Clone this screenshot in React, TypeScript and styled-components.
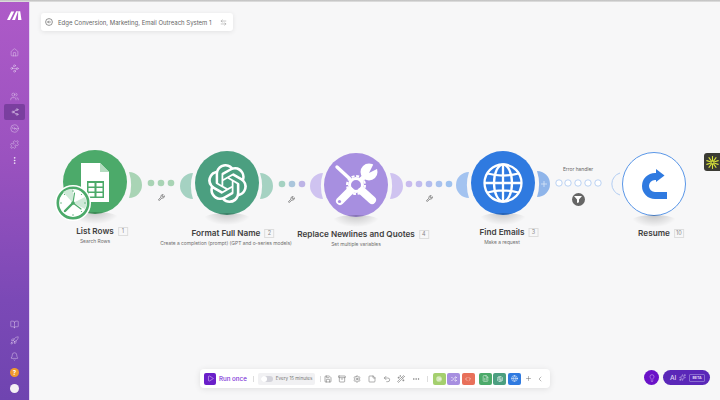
import React from "react";
import styled, { createGlobalStyle } from "styled-components";
import {
  House, Waypoints, Users, Share2, Disc3, Puzzle, EllipsisVertical, BookOpen, Rocket, Bell,
  ArrowLeftRight, Wrench, Play, Save, Archive, Settings, StickyNote, Undo2, Wand2,
  Ellipsis, Plus, ChevronLeft, Lightbulb, Sparkles, Shuffle, Globe, FileSpreadsheet, Cog, Code,
} from "lucide-react";
import { SiOpenai } from "react-icons/si";

const Global = createGlobalStyle`
  html, body { margin: 0; padding: 0; width: 720px; height: 400px; overflow: hidden; }
  body { font-family: Inter, "Noto Sans", sans-serif; background: #f7f7f8; }
  #root { width: 720px; height: 400px; }
  svg { flex: none; }
`;

const Page = styled.div`
  width: 720px; height: 400px; display: flex; position: relative; overflow: hidden;
  background: #f7f7f8;
  &::before {
    content: ""; position: absolute; left: 0; right: 0; top: 0; height: 2px; z-index: 5;
    background: linear-gradient(#bdbdbd, #e4e4e4);
  }
`;

const Sidebar = styled.nav`
  width: 29px; flex: none; box-sizing: border-box; display: flex; flex-direction: column;
  align-items: center; padding: 11px 0 4px;
  background: linear-gradient(180deg, #ae5ac8 0%, #9a52bf 40%, #7b49b6 75%, #6f44b0 100%);
  box-shadow: 1px 0 0 #e6d8f3;
`;
const Logo = styled.svg`width: 14.5px; height: 9px; margin-bottom: 24px; display: block;`;
const NavGroup = styled.div<{ $gap?: number }>`display: flex; flex-direction: column; align-items: center; margin-bottom: ${p => p.$gap || 0}px;`;
const NavItem = styled.div<{ $active?: boolean }>`
  width: 21px; height: 16px; display: flex; align-items: center; justify-content: center;
  border-radius: 2px; color: #e6d4f2;
  background: ${p => (p.$active ? "#7a3f9f" : "transparent")};
`;
const Bottom = styled.div`margin-top: auto; display: flex; flex-direction: column; align-items: center;`;
const HelpDot = styled.div`
  width: 9px; height: 9px; flex: none; border-radius: 50%; background: #f09a2e; color: #fff; font-size: 6px;
  font-weight: 700; display: flex; align-items: center; justify-content: center;
`;
const Avatar = styled.div`width: 9px; height: 9px; flex: none; border-radius: 50%; background: #f4f0f4;`;

const Canvas = styled.main`flex: 1; position: relative;`;

const TitleCard = styled.div`
  position: absolute; left: 12px; top: 13px; width: 192px; height: 18px; box-sizing: border-box;
  background: #fff; border-radius: 3px; box-shadow: 0 1px 5px rgba(0,0,0,.09);
  display: flex; align-items: center; padding: 0 6px 0 4px; gap: 5px; color: #666;
`;
const TitleText = styled.span`font-size: 6px; color: #666; white-space: nowrap; flex: 1;`;

const Wires = styled.svg`position: absolute; left: -29px; top: 0; width: 720px; height: 400px; pointer-events: none;`;

const Disc = styled.div<{ $x: number; $y: number; $bg: string; $ring?: string }>`
  position: absolute; left: ${p => p.$x - 29 - 32}px; top: ${p => p.$y - 32}px; width: 64px; height: 64px;
  box-sizing: border-box; border-radius: 50%; background: ${p => p.$bg};
  border: ${p => (p.$ring ? `1px solid ${p.$ring}` : "none")};
  display: flex; align-items: center; justify-content: center; color: #fff;
  &::after {
    content: ""; position: absolute; left: 8px; right: 8px; top: 62px; height: 12px; border-radius: 50%;
    background: radial-gradient(ellipse at center top, rgba(0,0,0,.2), rgba(0,0,0,0) 72%);
  }
`;
const Label = styled.div<{ $x: number; $y: number }>`
  position: absolute; left: ${p => p.$x - 29}px; top: ${p => p.$y}px; transform: translateX(-50%);
  display: flex; flex-direction: column; align-items: center; white-space: nowrap;
`;
const Name = styled.div`font-size: 8.2px; font-weight: 600; color: #404040; line-height: 11px; position: relative;`;
const Badge = styled.span`
  position: absolute; left: 100%; top: 1px; margin-left: 4px; min-width: 7px; height: 7px; padding: 0 0.5px;
  border: 1px solid #ddd; font-size: 5.5px; font-weight: 400; color: #888; line-height: 7px; text-align: center;
`;
const Sub = styled.div`font-size: 4.9px; color: #6e6e6e; line-height: 7px; margin-top: 0.5px;`;
const ErrorLabel = styled.div`
  position: absolute; left: ${578 - 29}px; top: 166px; transform: translateX(-50%);
  font-size: 4.9px; color: #666; white-space: nowrap;
`;
const Tool = styled.div<{ $x: number; $y: number }>`
  position: absolute; left: ${p => p.$x - 29 - 3.5}px; top: ${p => p.$y - 3.5}px; width: 7px; height: 7px;
  color: #555; display: flex;
`;
const Filter = styled.div`
  position: absolute; left: ${578 - 29 - 6.5}px; top: ${199 - 6.5}px; width: 13px; height: 13px; border-radius: 50%;
  background: #666; display: flex; align-items: center; justify-content: center;
`;
const Side = styled.div`
  position: absolute; right: 0; top: 153px; width: 16px; height: 18px; background: #3b3b34;
  border-radius: 3px 0 0 3px; display: flex; align-items: center; justify-content: center;
`;

const Toolbar = styled.div`
  position: absolute; left: 171px; top: 369px; width: 350px; height: 19px; box-sizing: border-box;
  background: #fff; border-radius: 4px; box-shadow: 0 1px 6px rgba(0,0,0,.1);
  display: flex; align-items: center; padding: 0 0 0 4px;
`;
const RunButton = styled.div`
  width: 12px; height: 12px; flex: none; border-radius: 2px; background: #6a1fc9; color: #fff;
  display: flex; align-items: center; justify-content: center;
`;
const RunText = styled.span`font-size: 6.2px; font-weight: 500; color: #7b2fd6; margin-left: 3px; white-space: nowrap;`;
const Divider = styled.span<{ $m: string }>`width: 1px; height: 6px; flex: none; background: #ddd; margin: ${p => p.$m};`;
const Schedule = styled.div`
  width: 57px; height: 12px; flex: none; box-sizing: border-box; background: #f1f1f3; border-radius: 2px;
  display: flex; align-items: center; padding: 0 3px; gap: 3px;
`;
const Toggle = styled.span`width: 12px; height: 6px; flex: none; border-radius: 3px; background: #d3d3da; display: flex; align-items: center;
  &::before { content: ""; width: 6px; height: 6px; border-radius: 50%; background: #fff; }`;
const ScheduleText = styled.span`font-size: 4.6px; color: #777; white-space: nowrap;`;
const Icons = styled.div`display: flex; align-items: center; gap: 6.7px; margin-left: 3px; color: #555; flex: none;`;
const Chips = styled.div<{ $ml?: number }>`display: flex; gap: 1.5px; flex: none; margin-left: ${p => p.$ml || 0}px;`;
const Chip = styled.div<{ $bg: string }>`
  width: 13px; height: 12px; border-radius: 2px; background: ${p => p.$bg}; color: #fff;
  display: flex; align-items: center; justify-content: center;
`;
const EndIcons = styled.div`display: flex; align-items: center; gap: 4px; margin-left: 4px; color: #666; flex: none;`;

const AiRow = styled.div`
  position: absolute; left: 615px; top: 370px; display: flex; align-items: center; gap: 4px;
`;
const Bulb = styled.div`
  width: 15px; height: 15px; border-radius: 50%; background: #6a12c8; color: #e4d4f6;
  display: flex; align-items: center; justify-content: center;
`;
const AiPill = styled.div`
  width: 47px; height: 15px; border-radius: 8px; background: #5a27b8; color: #e0d8f6;
  display: flex; align-items: center; padding-left: 7px; box-sizing: border-box; gap: 3px;
`;
const AiText = styled.span`font-size: 6.5px; font-weight: 500;`;
const Beta = styled.span`font-size: 3.6px; border: 1px solid #8a6bd0; border-radius: 1px; padding: 1px 2px; line-height: 4px; font-weight: 700;`;

const Moon = ({ x, y, dir, fill, h = 13 }: { x: number; y: number; dir: 1 | -1; fill: string; h?: number }) => (
  <path
    d={`M${x} ${y - h} A${h} ${h} 0 0 ${dir > 0 ? 1 : 0} ${x} ${y + h} A42 42 0 0 ${dir > 0 ? 0 : 1} ${x} ${y - h}Z`}
    fill={fill}
  />
);

const dots: [number, number, string][] = [
  [151, 183, "#a9d4b5"], [161, 183, "#a9d4b5"], [171, 183, "#a9d4b5"],
  [282, 184, "#a5d2c2"], [292, 184, "#abc6dc"], [302, 184, "#bdb4e6"],
  [409, 184, "#c9bbee"], [419, 184, "#c2bcee"], [429, 184, "#b4bdee"], [439, 184, "#a9c2ee"], [449, 184, "#9fc2ef"],
];

const navTop = [House, Waypoints];

const ClockWrap = styled.div`
  position: absolute; left: ${55 - 29}px; top: 185px; width: 36px; height: 36px; display: flex;
`;

function ClockBadge() {
  return (
    <ClockWrap>
      <svg width="36" height="36" viewBox="0 0 36 36">
        <circle cx="18" cy="18" r="18" fill="#fff" />
        <circle cx="18" cy="18" r="15.2" fill="#fff" stroke="#4caa6a" strokeWidth="2.6" />
        <path d="M18 18 L8 7 A15 15 0 0 1 18 4Z" fill="#cfe9d8" />
        <path d="M18 18 L30 12 A14 14 0 0 1 30 24Z" fill="#cfe9d8" />
        <path d="M18 18 L19.5 8 M18 18 L26 24" stroke="#4caa6a" strokeWidth="1.2" strokeLinecap="round" />
        <path d="M18 18 L10 26" stroke="#4caa6a" strokeWidth="2.4" strokeLinecap="round" />
        <circle cx="18" cy="18" r="1.8" fill="#4caa6a" />
        <g fill="#4caa6a">
          <circle cx="18" cy="6" r=".7" /><circle cx="18" cy="30" r=".7" />
          <circle cx="6" cy="18" r=".7" /><circle cx="30" cy="18" r=".7" />
          <circle cx="26.5" cy="9.5" r=".6" /><circle cx="9.5" cy="26.5" r=".6" />
          <circle cx="26.5" cy="26.5" r=".6" /><circle cx="9.5" cy="9.5" r=".6" />
        </g>
      </svg>
    </ClockWrap>
  );
}

export default function App() {
  const toolIcon = { size: 8, strokeWidth: 1.4 };
  return (
    <Page>
      <Global />
      <Sidebar>
        <Logo viewBox="0 0 14.5 9">
          <path d="M0 9 L4.2 .5 L7.2 .5 L3 9Z M5 9 L9.2 .2 L11 .2 L8 9Z M11.2 .2 H13.2 L14.5 9 H11Z" fill="#fff" />
        </Logo>
        <NavGroup $gap={12}>
          {navTop.map((I, i) => <NavItem key={i}><I size={9} strokeWidth={1.2} /></NavItem>)}
        </NavGroup>
        <NavGroup>
          <NavItem><Users size={9} strokeWidth={1.2} /></NavItem>
          <NavItem $active><Share2 size={8} strokeWidth={1.6} /></NavItem>
          <NavItem><Disc3 size={9} strokeWidth={1.2} /></NavItem>
          <NavItem><Puzzle size={9} strokeWidth={1.2} /></NavItem>
          <NavItem><EllipsisVertical size={9} strokeWidth={1.8} color="#fff" /></NavItem>
        </NavGroup>
        <Bottom>
          <NavItem><BookOpen size={9} strokeWidth={1.2} /></NavItem>
          <NavItem><Rocket size={9} strokeWidth={1.2} /></NavItem>
          <NavItem><Bell size={9} strokeWidth={1.2} /></NavItem>
          <NavItem><HelpDot>?</HelpDot></NavItem>
          <NavItem><Avatar /></NavItem>
        </Bottom>
      </Sidebar>

      <Canvas>
        <TitleCard>
          <svg width="8" height="8" viewBox="0 0 8 8" fill="none" stroke="#666" strokeWidth="0.7">
            <circle cx="4" cy="4" r="3.4" />
            <path d="M5.8 4H2.6M3.9 2.7L2.6 4L3.9 5.3" />
          </svg>
          <TitleText>Edge Conversion, Marketing, Email Outreach System 1</TitleText>
          <ArrowLeftRight size={7} strokeWidth={1.2} />
        </TitleCard>

        <Wires viewBox="0 0 720 400">
          <Moon x={129} y={185} dir={1} fill="#a9d4b5" />
          <Moon x={193} y={186} dir={-1} fill="#a5d2c2" />
          <Moon x={260} y={186} dir={1} fill="#a5d2c2" />
          <Moon x={323} y={186} dir={-1} fill="#cfc3f0" />
          <Moon x={390} y={186} dir={1} fill="#cfc3f0" />
          <Moon x={469} y={185} dir={-1} fill="#a3c3f0" />
          <Moon x={537} y={184} dir={1} fill="#8fb5ea" />
          <path d="M541 184h6M544 181v6" stroke="#d8e6f8" strokeWidth="0.8" />
          <path d="M620 173 A11.5 11.5 0 0 0 620 195" fill="none" stroke="#a9c7f0" strokeWidth="0.9" />
          {dots.map(([x, y, c], i) => <circle key={i} cx={x} cy={y} r={3.3} fill={c} />)}
          {[559, 568, 578, 588, 598].map(x => (
            <circle key={x} cx={x} cy={183} r={3.2} fill="#fff" stroke="#a9c7f0" strokeWidth={0.8} />
          ))}
        </Wires>

        <Disc $x={95} $y={182} $bg="#4caa6a">
          <svg width="64" height="64" viewBox="0 0 64 64">
            <path d="M18 13 H37 L46 22 V52 H18Z" fill="#fff" />
            <path d="M37 13 L46 22 H37Z" fill="#b4dcc0" />
            <path d="M24 31 H41 V48 H24Z M25.5 33 V36.5 H31.5 V33Z M33.5 33 V36.5 H39.5 V33Z M25.5 38 V41.5 H31.5 V38Z M33.5 38 V41.5 H39.5 V38Z M25.5 43 V46.5 H31.5 V43Z M33.5 43 V46.5 H39.5 V43Z" fill="#4caa6a" fillRule="evenodd" />
          </svg>
        </Disc>
        <ClockBadge />
        <Disc $x={227} $y={183} $bg="#4b9f80"><SiOpenai size={39} /></Disc>
        <Disc $x={356} $y={185} $bg="#a78fe0">
          <svg width="64" height="64" viewBox="0 0 64 64" fill="none">
            <path d="M13 14 L26 26" stroke="#fff" strokeWidth="3.4" strokeLinecap="round" />
            <path d="M38 38 L48 47" stroke="#fff" strokeWidth="8" strokeLinecap="round" />
            <path d="M26 38 L16 48" stroke="#fff" strokeWidth="8" strokeLinecap="round" />
            <path d="M37 27 L43 21" stroke="#fff" strokeWidth="5" />
            <circle cx="45" cy="19" r="8.5" fill="#fff" />
            <path d="M45 20 L51 8 L57 14Z" fill="#a78fe0" />
            <circle cx="32" cy="32" r="6.5" stroke="#fff" strokeWidth="3" />
            <circle cx="32" cy="32" r="9" stroke="#fff" strokeWidth="2" strokeDasharray="3 1.7" />
            <circle cx="15.5" cy="48.5" r="1.6" fill="#a78fe0" />
          </svg>
        </Disc>
        <Disc $x={503} $y={183} $bg="#2f7ae0">
          <svg width="42" height="42" viewBox="0 0 42 42" fill="none" stroke="#fff" strokeWidth="2.3">
            <circle cx="21" cy="21" r="18.5" />
            <ellipse cx="21" cy="21" rx="9" ry="18.5" />
            <path d="M21 2.5V39.5M2.5 21H39.5M5.5 11.5C15 14 27 14 36.5 11.5M5.5 30.5C15 28 27 28 36.5 30.5" />
          </svg>
        </Disc>
        <Disc $x={654} $y={184} $bg="#fff" $ring="#5a97e8">
          <svg width="25" height="30" viewBox="0 0 25 30" fill="none">
            <path d="M25 26.5 H13 A9.5 9.5 0 0 1 13 7.5 H15" stroke="#2f7ae0" strokeWidth="7" />
            <path d="M14 0 L22.5 6.5 L14 13Z" fill="#2f7ae0" />
          </svg>
        </Disc>

        <Tool $x={161} $y={197}><Wrench size={7} strokeWidth={2.2} /></Tool>
        <Tool $x={291} $y={199}><Wrench size={7} strokeWidth={2.2} /></Tool>
        <Tool $x={429} $y={198}><Wrench size={7} strokeWidth={2.2} /></Tool>

        <ErrorLabel>Error handler</ErrorLabel>
        <Filter>
          <svg width="8" height="7" viewBox="0 0 8 7"><path d="M0 0H8L5 3.6V6.2L3 7V3.6Z" fill="#fff" /></svg>
        </Filter>

        <Label $x={95} $y={226}><Name>List Rows<Badge>1</Badge></Name><Sub>Search Rows</Sub></Label>
        <Label $x={226} $y={228}><Name>Format Full Name<Badge>2</Badge></Name><Sub>Create a completion (prompt) (GPT and o-series models)</Sub></Label>
        <Label $x={356} $y={229}><Name>Replace Newlines and Quotes<Badge>4</Badge></Name><Sub>Set multiple variables</Sub></Label>
        <Label $x={502} $y={227}><Name>Find Emails<Badge>3</Badge></Name><Sub>Make a request</Sub></Label>
        <Label $x={654} $y={228}><Name>Resume<Badge>10</Badge></Name></Label>

        <Side>
          <svg width="13" height="13" viewBox="-6.5 -6.5 13 13" stroke="#d8e23a" strokeWidth="1.1" strokeLinecap="round">
            {[0, 36, 72, 108, 144, 180, 216, 252, 288, 324].map(a => (
              <path key={a} d="M0 -1.4V-6" transform={`rotate(${a})`} />
            ))}
          </svg>
        </Side>

        <Toolbar>
          <RunButton><Play size={7} strokeWidth={1.5} /></RunButton>
          <RunText>Run once</RunText>
          <Divider $m="0 4px 0 6px" />
          <Schedule><Toggle /><ScheduleText>Every 15 minutes</ScheduleText></Schedule>
          <Divider $m="0 0 0 5px" />
          <Icons>
            <Save {...toolIcon} />
            <Archive {...toolIcon} />
            <Settings {...toolIcon} />
            <StickyNote {...toolIcon} />
            <Undo2 {...toolIcon} />
            <Wand2 {...toolIcon} />
            <Ellipsis {...toolIcon} />
          </Icons>
          <Divider $m="0 5px 0 7px" />
          <Chips>
            <Chip $bg="#a4cf6e"><Cog size={6} strokeWidth={2} /></Chip>
            <Chip $bg="#a78fe0"><Shuffle size={6} strokeWidth={2} /></Chip>
            <Chip $bg="#e8705a"><Code size={6} strokeWidth={2} /></Chip>
          </Chips>
          <Chips $ml={4}>
            <Chip $bg="#4caa6a"><FileSpreadsheet size={7} strokeWidth={1.6} /></Chip>
            <Chip $bg="#4b9f80"><SiOpenai size={6} /></Chip>
            <Chip $bg="#2f7ae0"><Globe size={7} strokeWidth={1.6} /></Chip>
          </Chips>
          <EndIcons>
            <Plus size={7} strokeWidth={1.6} />
            <ChevronLeft size={8} strokeWidth={1.4} />
          </EndIcons>
        </Toolbar>

        <AiRow>
          <Bulb><Lightbulb size={8} strokeWidth={1.4} /></Bulb>
          <AiPill><AiText>AI</AiText><Sparkles size={7} strokeWidth={1.5} /><Beta>BETA</Beta></AiPill>
        </AiRow>
      </Canvas>
    </Page>
  );
}
